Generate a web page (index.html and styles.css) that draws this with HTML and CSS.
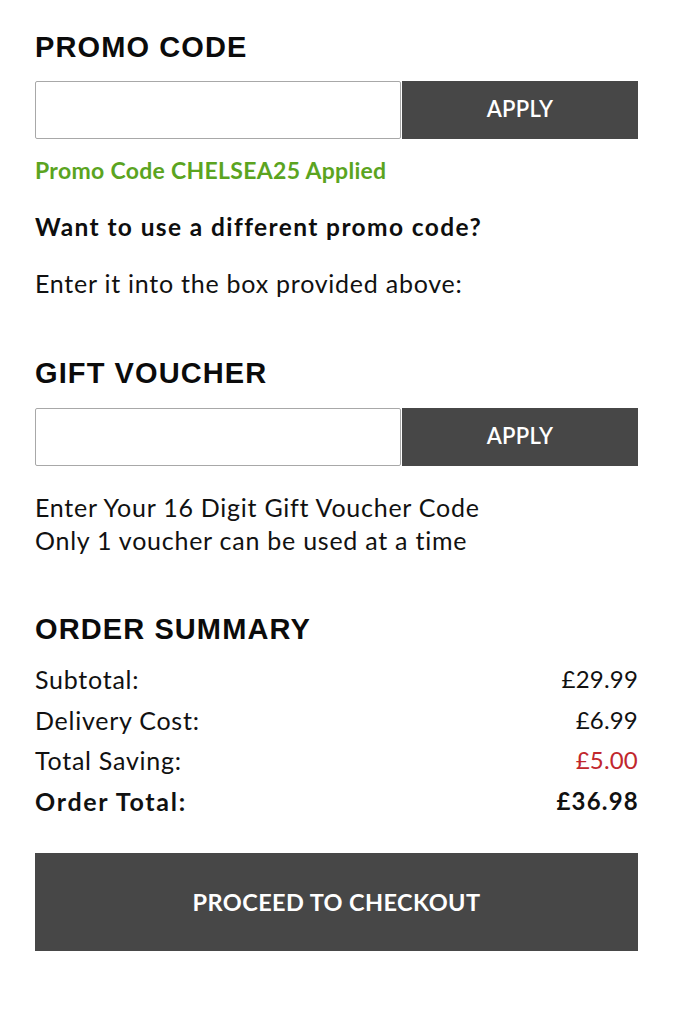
FILE: index.html
```html
<!DOCTYPE html>
<html lang="en">
<head>
<meta charset="utf-8">
<title>Basket</title>
<link rel="stylesheet" href="styles.css">
</head>
<body>
<div class="page">
  <h2 class="title title-promo">PROMO CODE</h2>
  <form class="code-row">
    <input class="code-input" type="text" aria-label="Promo code">
    <button class="apply" type="button">APPLY</button>
  </form>
  <p class="applied">Promo Code CHELSEA25 Applied</p>
  <p class="question">Want to use a different promo code?</p>
  <p class="hint">Enter it into the box provided above:</p>

  <h2 class="title title-gift">GIFT VOUCHER</h2>
  <form class="code-row">
    <input class="code-input" type="text" aria-label="Gift voucher">
    <button class="apply" type="button">APPLY</button>
  </form>
  <p class="voucher-note">Enter Your 16 Digit Gift Voucher Code<br>Only 1 voucher can be used at a time</p>

  <h2 class="title title-summary">ORDER SUMMARY</h2>
  <div class="summary">
    <div class="row"><span class="label">Subtotal:</span><span class="value">£29.99</span></div>
    <div class="row"><span class="label">Delivery Cost:</span><span class="value">£6.99</span></div>
    <div class="row"><span class="label">Total Saving:</span><span class="value saving">£5.00</span></div>
    <div class="row total"><span class="label">Order Total:</span><span class="value">£36.98</span></div>
  </div>
  <button class="checkout" type="button">PROCEED TO CHECKOUT</button>
</div>
</body>
</html>
```
FILE: styles.css
```css
html, body {
  margin: 0;
  padding: 0;
  background: #fff;
}
body {
  font-family: Lato, "Open Sans", sans-serif;
  color: #111;
}
.page {
  width: 603px;
  margin-left: 35px;
  padding-top: 31px;
  padding-bottom: 40px;
}
.title {
  font-family: "Liberation Sans", Arial, sans-serif;
  font-weight: 700;
  font-size: 29px;
  letter-spacing: 1.1px;
  line-height: 32px;
  margin: 0;
  color: #0b0b0b;
}
.title-gift { margin-top: 59px; }
.title-summary { margin-top: 56px; }
.code-row {
  display: flex;
  height: 58px;
  margin: 18px 0 0;
}
.title-gift + .code-row { margin-top: 19px; }
.code-input {
  flex: 0 0 366px;
  box-sizing: border-box;
  height: 58px;
  border: 1px solid #a8a8a8;
  border-radius: 2px;
  margin: 0;
  padding: 0 10px;
  font: inherit;
  background: #fff;
}
.apply {
  flex: 1;
  margin: 0 0 0 1px;
  border: 0;
  background: #474747;
  color: #fff;
  font-family: Lato, "Open Sans", sans-serif;
  font-weight: 600;
  font-size: 22px;
  letter-spacing: 0.3px;
  padding: 0 0 4px;
}
.applied {
  margin: 16px 0 0;
  line-height: 30px;
  font-size: 23px;
  letter-spacing: 0.3px;
  font-weight: 700;
  color: #5ba41f;
}
.question {
  margin: 27px 0 0;
  line-height: 30px;
  font-size: 24.5px;
  letter-spacing: 1.4px;
  font-weight: 700;
  color: #0e0e0e;
}
.hint {
  margin: 26px 0 0;
  line-height: 30px;
  font-size: 25px;
  letter-spacing: 0.75px;
  font-weight: 400;
}
.voucher-note {
  margin: 25px 0 0;
  line-height: 33px;
  font-size: 25px;
  letter-spacing: 0.75px;
}
.summary {
  margin-top: 14px;
}
.row {
  display: flex;
  justify-content: space-between;
  line-height: 40.5px;
  font-size: 25px;
}
.label { letter-spacing: 0.75px; }
.value { font-size: 24px; letter-spacing: 0.2px; }
.saving { color: #c1272d; }
.row.total { font-weight: 700; }
.row.total .label { letter-spacing: 1.7px; }
.row.total .value { letter-spacing: 1.2px; margin-right: -1px; }
.checkout {
  display: block;
  width: 100%;
  height: 98px;
  margin: 32px 0 0;
  border: 0;
  background: #474747;
  color: #fff;
  font-family: Lato, "Open Sans", sans-serif;
  font-weight: 700;
  font-size: 23.5px;
  letter-spacing: 0.4px;
  padding: 0;
}
```
